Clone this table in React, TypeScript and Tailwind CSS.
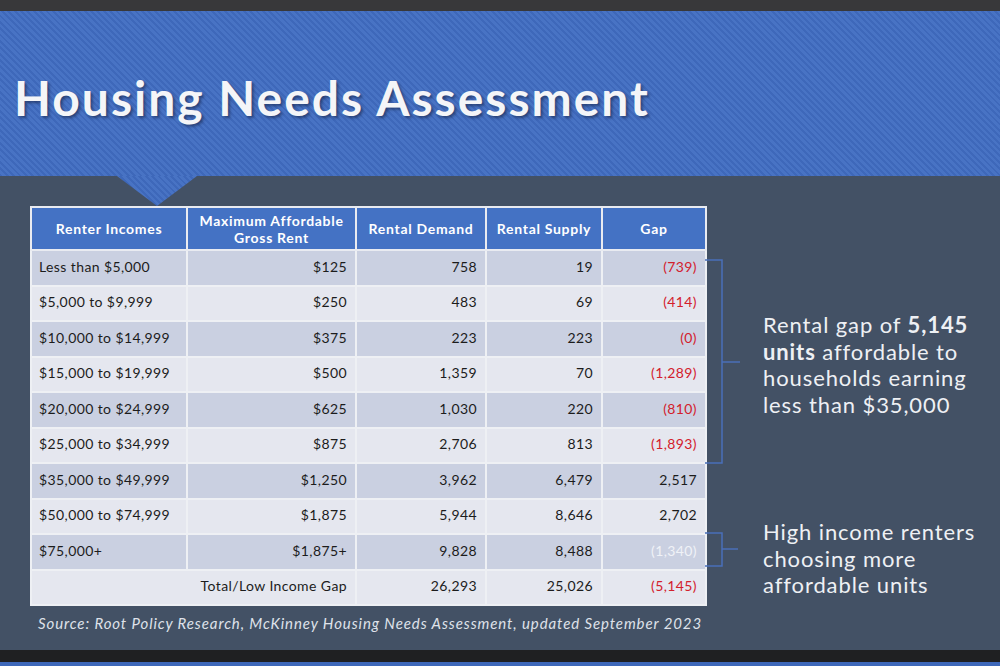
import React from "react";

const rows: [string, string, string, string, string, string][] = [
  ["Less than $5,000", "$125", "758", "19", "(739)", "red"],
  ["$5,000 to $9,999", "$250", "483", "69", "(414)", "red"],
  ["$10,000 to $14,999", "$375", "223", "223", "(0)", "red"],
  ["$15,000 to $19,999", "$500", "1,359", "70", "(1,289)", "red"],
  ["$20,000 to $24,999", "$625", "1,030", "220", "(810)", "red"],
  ["$25,000 to $34,999", "$875", "2,706", "813", "(1,893)", "red"],
  ["$35,000 to $49,999", "$1,250", "3,962", "6,479", "2,517", ""],
  ["$50,000 to $74,999", "$1,875", "5,944", "8,646", "2,702", ""],
  ["$75,000+", "$1,875+", "9,828", "8,488", "(1,340)", "light"],
];

const stripes =
  "bg-[repeating-linear-gradient(45deg,#3e68ba_0px,#3e68ba_2px,#4873c4_2px,#4873c4_4.5px)]";

export default function App() {
  return (
    <div className="w-[1000px] h-[666px] overflow-hidden flex flex-col font-['Lato','Open_Sans',sans-serif] bg-[#435165]">
      <div className="h-[11px] bg-[#38383a]" />
      <div className="h-[165px] bg-[repeating-linear-gradient(45deg,#3e68ba_0px,#3e68ba_2px,#4873c4_2px,#4873c4_4.5px)] pl-[14px] pt-[63px]">
        <h1 className="text-[48px] leading-[48px] font-bold text-[#f4f5f8] tracking-[2px] [text-shadow:2px_2px_3px_rgba(20,30,60,0.55)]">
          Housing Needs Assessment
        </h1>
      </div>
      <div className="relative h-[474px] bg-[#435165] flex pl-[30px] pt-[30px]">
        <div
          className={`absolute left-[117px] top-0 w-[80px] h-[30px] ${stripes} [clip-path:polygon(0_0,100%_0,50%_100%)]`}
        />
        <div className="flex flex-col w-[675px]">
          <table className="w-[675px] border-collapse table-fixed text-[14px] tracking-[0.4px] text-[#1c1c1c]">
            <colgroup>
              <col className="w-[156px]" />
              <col className="w-[169px]" />
              <col className="w-[130px]" />
              <col className="w-[116px]" />
              <col className="w-[104px]" />
            </colgroup>
            <thead>
              <tr className="h-[43px] bg-[#4472c4] text-white font-bold text-[14px] leading-[17px] tracking-[0.7px]">
                <th className="border-2 border-[#e9ebf1] text-center font-bold">Renter Incomes</th>
                <th className="border-2 border-[#e9ebf1] text-center font-bold">
                  Maximum Affordable
                  <br />
                  Gross Rent
                </th>
                <th className="border-2 border-[#e9ebf1] text-center font-bold">Rental Demand</th>
                <th className="border-2 border-[#e9ebf1] text-center font-bold">Rental Supply</th>
                <th className="border-2 border-[#e9ebf1] text-center font-bold">Gap</th>
              </tr>
            </thead>
            <tbody>
              {rows.map((r, i) => (
                <tr
                  key={i}
                  className={`h-[35.5px] ${i % 2 === 0 ? "bg-[#cad0e1]" : "bg-[#e5e7ef]"}`}
                >
                  <td className="border-2 border-[#eef0f4] pl-[7px] pb-[3px] align-middle">{r[0]}</td>
                  <td className="border-2 border-[#eef0f4] pr-[8px] pb-[3px] text-right">{r[1]}</td>
                  <td className="border-2 border-[#eef0f4] pr-[8px] pb-[3px] text-right">{r[2]}</td>
                  <td className="border-2 border-[#eef0f4] pr-[8px] pb-[3px] text-right">{r[3]}</td>
                  <td
                    className={`border-2 border-[#eef0f4] pr-[8px] pb-[3px] text-right ${
                      r[5] === "red"
                        ? "text-[#d3202c]"
                        : r[5] === "light"
                        ? "text-[#f0f2f7]"
                        : "text-[#1c1c1c]"
                    }`}
                  >
                    {r[4]}
                  </td>
                </tr>
              ))}
              <tr className="h-[35.5px] bg-[#e5e7ef]">
                <td colSpan={2} className="border-2 border-[#eef0f4] pr-[8px] pb-[3px] text-right">
                  Total/Low Income Gap
                </td>
                <td className="border-2 border-[#eef0f4] pr-[8px] pb-[3px] text-right">26,293</td>
                <td className="border-2 border-[#eef0f4] pr-[8px] pb-[3px] text-right">25,026</td>
                <td className="border-2 border-[#eef0f4] pr-[8px] pb-[3px] text-right text-[#d3202c]">(5,145)</td>
              </tr>
            </tbody>
          </table>
          <p className="mt-[8px] pl-[8px] text-[15px] leading-[18px] italic tracking-[0.9px] whitespace-nowrap text-[#dfe2ea]">
            Source: Root Policy Research, McKinney Housing Needs Assessment, updated September 2023
          </p>
        </div>
        <svg width="58" height="400" viewBox="0 0 58 400" className="shrink-0">
          <g fill="none" stroke="#4a6fb9" strokeWidth="1.5">
            <path d="M0 54 H17 V257 H0" />
            <path d="M17 156 H35" />
            <path d="M0 327 H17 V360 H0" />
            <path d="M17 343 H33" />
          </g>
        </svg>
        <div className="flex flex-col text-[22px] leading-[26.5px] tracking-[0.9px] text-[#eef0f4]">
          <p className="mt-[106px]">
            Rental gap of <span className="font-bold">5,145</span>
            <br />
            <span className="font-bold">units</span> affordable to
            <br />
            households earning
            <br />
            less than $35,000
          </p>
          <p className="mt-[101px]">
            High income renters
            <br />
            choosing more
            <br />
            affordable units
          </p>
        </div>
      </div>
      <div className="h-[12px] bg-[#1f2022]" />
      <div className="flex-1 bg-[#3e68ba]" />
    </div>
  );
}
